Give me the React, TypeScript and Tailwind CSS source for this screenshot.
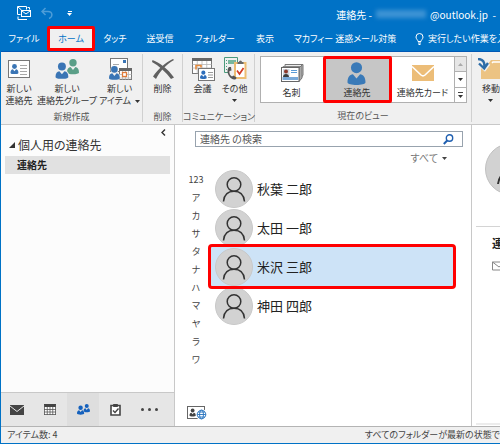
import type { ReactNode } from 'react';

const tabs = [
  { label: 'ファイル', width: 'w-[46px]' },
  { label: 'ホーム', width: 'w-12', active: true },
  { label: 'タッチ', width: 'w-10' },
  { label: '送受信', width: 'w-[50px]' },
  { label: 'フォルダー', width: 'w-[60px]' },
  { label: '表示', width: 'w-10' },
  { label: 'マカフィー 迷惑メール対策', width: 'w-[120px]' },
];

const kanaIndex = ['123', 'ア', 'カ', 'サ', 'タ', 'ナ', 'ハ', 'マ', 'ヤ', 'ラ', 'ワ'];

const contacts = [
  { name: '秋葉 二郎' },
  { name: '太田 一郎' },
  { name: '米沢 三郎', selected: true },
  { name: '神田 四郎' },
];

function Person({ x, y, scale = 1, color }: { x: number; y: number; scale?: number; color: string }) {
  return (
    <g transform={`translate(${x} ${y}) scale(${scale})`} fill={color} style={{ paintOrder: 'stroke' }}>
      <circle cx="6" cy="3.800" r="3.700" />
      <path d="M0 13.500C0 10 1.500 8.300 3.600 8.100L6 11l2.400-2.900C10.500 8.300 12 10 12 13.500c0 1.200-3 1.800-6 1.800s-6-.6-6-1.800z" />
    </g>
  );
}

function NewContactIcon() {
  return (
    <svg width="24" height="20" viewBox="0 0 24 20">
      <rect x="1.500" y="1.500" width="21" height="17" fill="#fff" stroke="#777" />
      <Person x={3.5} y={5} scale={0.66} color="#3a75b5" />
      <path d="M13 6.500h7M13 9.500h7M13 12.500h7M13 15.500h7" stroke="#a8a8a8" />
    </svg>
  );
}

function NewGroupIcon() {
  return (
    <svg width="24" height="20" viewBox="0 0 24 20">
      <Person x={12} y={0} scale={1} color="#5b9f88" />
      <g stroke="#f0f0f0" strokeWidth="1.600">
        <Person x={0.5} y={3.5} scale={1.07} color="#3a75b5" />
      </g>
    </svg>
  );
}

function CalendarGrid({ x, y, w, h }: { x: number; y: number; w: number; h: number }) {
  return (
    <g>
      <rect x={x} y={y} width={w} height={h} fill="#fff" stroke="#777" />
      <path
        d={`M${x} ${y + 6}h${w}M${x} ${y + 9.5}h${w}M${x + w * 0.25} ${y}v${h}M${x + w * 0.5} ${y}v${h}M${x + w * 0.75} ${y}v${h}`}
        stroke="#b5b5b5"
        strokeWidth="0.8"
      />
      <path d={`M${x - 0.5} ${y + 1}h${w + 1}`} stroke="#666" strokeWidth="3" />
    </g>
  );
}

function NewItemIcon() {
  return (
    <svg width="24" height="22" viewBox="0 0 24 22">
      <rect x="2.500" y="0.500" width="17" height="13" fill="#fff" stroke="#777" />
      <path d="M5 6.500h6M5 8.500h4" stroke="#aaa" />
      <rect x="15" y="2" width="3" height="3" fill="#3a75b5" />
      <CalendarGrid x={11.5} y={10.5} w={12} h={11} />
      <rect x="14.500" y="14.500" width="4" height="4" fill="#fff" stroke="#e07b39" strokeWidth="1.300" />
      <g stroke="#f0f0f0" strokeWidth="1.200">
        <Person x={1} y={8} scale={0.9} color="#3a75b5" />
      </g>
    </svg>
  );
}

function DeleteIcon() {
  return (
    <svg width="24" height="22" viewBox="0 0 24 22">
      <path d="M1.500 2C9 5 17 11 23 19.500l-3 1.500C15 14 8 8 1 4z" fill="#606060" />
      <path d="M22 1C14 5 7 11 2 18.500l3 2.500C9 13 15 6.500 23 2z" fill="#606060" />
    </svg>
  );
}

function MeetingIcon() {
  return (
    <svg width="24" height="24" viewBox="0 0 24 24">
      <CalendarGrid x={1.5} y={1.5} w={19} h={15} />
      <path d="M5 12.500V8.500h5v2" fill="none" stroke="#e58a3c" strokeWidth="1.600" />
      <rect x="7.500" y="11.500" width="16" height="12" fill="#fff" stroke="#777" />
      <Person x={9} y={13.5} scale={0.56} color="#2e6ebb" />
      <path d="M17 15.500h5M17 18h5M17 20.500h5" stroke="#999" />
    </svg>
  );
}

function OtherIcon() {
  return (
    <svg width="24" height="24" viewBox="0 0 24 24">
      <path d="M14.500 5V0.500h-13v15h4" fill="none" stroke="#4b9a7c" />
      <path d="M3 3.500h1M3 6.500h1M3 9.500h1M3 12.500h1" stroke="#4b9a7c" />
      <rect x="5" y="3" width="8" height="4" fill="#78b79d" />
      <rect x="12" y="6" width="10.500" height="15" fill="#fff" stroke="#edbd73" strokeWidth="2" />
      <path d="M14.500 7V5h1.500a1.500 1.500 0 0 1 3 0h1.500v2z" fill="#666" />
      <path d="M14 13.500l2.500 3.500 4-6" fill="none" stroke="#d33b24" strokeWidth="1.700" />
      <path d="M6 10c-2 2-2 6 0 9s5 4.500 7 3l.5-1.500-3-2-1.500 1c-2-1-3-3.500-2.500-5.500l2-.5L8 10z" fill="#555" />
    </svg>
  );
}

function BusinessCardIcon() {
  return (
    <svg width="24" height="20" viewBox="0 0 24 20">
      <path d="M5 4V1.500h18V12l-2 3" fill="#ececec" stroke="#777" />
      <path d="M3 6V3.500h18V14" fill="#fff" stroke="#888" />
      <path d="M19 5l3-3v13l-3 3.500z" fill="#aaa" stroke="#777" />
      <rect x="1.500" y="4.500" width="17.500" height="14" fill="#fff" stroke="#666" />
      <rect x="3" y="6" width="6.500" height="7.500" fill="#cfd8e0" />
      <circle cx="6" cy="8.500" r="2" fill="#8c3a2c" />
      <path d="M3 14c0-4 6-4 6 0z" fill="#3c3c3c" />
      <path d="M11 7.500h6M11 9.500h6" stroke="#5b9bd5" />
      <rect x="2.500" y="14" width="15.500" height="3" fill="#79a9d8" />
    </svg>
  );
}

function EnvelopeIcon() {
  return (
    <svg width="24" height="18" viewBox="0 0 24 18">
      <rect x="1" y="1" width="22" height="16" fill="#ecbd78" />
      <path d="M1 2.500l9 8.500q2 1.800 4 0l9-8.500" fill="none" stroke="#fff" strokeWidth="1.600" />
    </svg>
  );
}

function MoveIcon() {
  return (
    <svg width="26" height="22" viewBox="0 0 26 22">
      <path d="M3 21V6h7l3-4h9l3 4h1v15z" fill="#ecc383" />
      <path d="M14 5l1-1h7" fill="none" stroke="#fff" strokeWidth="1.500" />
      <path d="M1 1c5 0 7 3 6 9M2 6l4.700 4.500L10.500 5.500" fill="none" stroke="#f0f0f0" strokeWidth="4.500" />
      <path d="M0 1c5 0 7 3 6.200 9M1 5.500l5.200 5L10 5" fill="none" stroke="#2e6da8" strokeWidth="2.400" />
    </svg>
  );
}

function Caret({ className = '' }: { className?: string }) {
  return (
    <svg className={className} width="5" height="3" viewBox="0 0 5 3">
      <path d="M0 0h5L2.500 3z" fill="currentColor" />
    </svg>
  );
}

function RibbonButton({ icon, lines, width, caret }: { icon: ReactNode; lines: string[]; width: string; caret?: boolean }) {
  return (
    <button type="button" className={`flex shrink-0 flex-col items-center whitespace-nowrap ${width}`}>
      <span className="flex h-6 items-center justify-center">{icon}</span>
      <span className="mt-0.5 flex h-6 flex-col items-center leading-3">
        {lines.map((line, i) => (
          <span key={line} className="flex items-center gap-1">
            {line}
            {caret && i === 1 && <Caret />}
          </span>
        ))}
        {caret && lines.length === 1 && <Caret className="mt-1" />}
      </span>
    </button>
  );
}

function RibbonGroup({ label, width, children }: { label: string; width: string; children: ReactNode }) {
  return (
    <section className={`my-0.5 flex shrink-0 flex-col border-r border-[#d0d0d0] ${width}`}>
      <div className="flex h-[54px] justify-center pt-[3px]">{children}</div>
      <h2 className="mt-1 text-center leading-3 whitespace-nowrap text-[#555]">{label}</h2>
    </section>
  );
}

function Avatar() {
  return (
    <svg className="shrink-0" width="38" height="38" viewBox="0 0 38 38">
      <circle cx="19" cy="19" r="18.500" fill="#d2d2d2" stroke="#c8c8c8" />
      <g fill="none" stroke="#333" strokeWidth="1.500">
        <ellipse cx="19" cy="14.500" rx="6.800" ry="6.800" />
        <path d="M8.500 31.500c.6-6.800 4.800-10.200 10.500-10.200s9.900 3.400 10.500 10.200" />
      </g>
    </svg>
  );
}

function TitleBar() {
  return (
    <div className="flex h-[26px] items-center pl-4 text-white">
      <button type="button" aria-label="送受信">
        <svg width="14" height="14" viewBox="0 0 14 14" fill="none" stroke="#fff">
          <path d="M3.500 8.500h-3v-8h9v3M1 1l3.500 3" />
          <rect x="4.500" y="4.500" width="9" height="6" fill="#0072c6" />
          <path d="M5 5l4 3 4-3M1 10.500v3h9M10.500 1.500h2v2" />
        </svg>
      </button>
      <button type="button" aria-label="元に戻す" className="ml-[10px]">
        <svg width="12" height="12" viewBox="0 0 12 12" fill="none" stroke="#4d9dd8" strokeWidth="1.500">
          <path d="M4.500 1L1 4.500 4.500 8M1 4.500h6c5 0 5 6 1 7" />
        </svg>
      </button>
      <button type="button" aria-label="カスタマイズ" className="ml-[14px] flex flex-col items-center gap-px">
        <span className="h-px w-1 bg-white" />
        <Caret />
      </button>
      <h1 className="mt-0.5 ml-auto flex shrink-0 items-center pr-1 text-[10px] whitespace-nowrap">
        連絡先 -<span className="mx-1 h-2 w-[50px] bg-[#3d93d4] blur-[2px]" />
        @outlook.jp&nbsp; -
      </h1>
    </div>
  );
}

function TabBar() {
  return (
    <nav className="flex h-[26px] border-b border-[#0058b4] text-white">
      {tabs.map((tab) => (
        <button
          key={tab.label}
          type="button"
          className={`shrink-0 whitespace-nowrap ${tab.width} ${
            tab.active ? 'rounded-xs border-[3px] border-[#ff0000] bg-[#f0f0f0] text-[#0072c6]' : ''
          }`}
        >
          {tab.label}
        </button>
      ))}
      <button type="button" className="ml-[10px] flex shrink-0 items-center gap-1 whitespace-nowrap">
        <svg width="9" height="12" viewBox="0 0 9 12" fill="none" stroke="#fff">
          <path d="M3 8.500C3 7 1 6 1 4a3.500 3.500 0 0 1 7 0c0 2-2 3-2 4.500zM3 10h3M3.500 11.500h2" />
        </svg>
        実行したい作業を入力
      </button>
    </nav>
  );
}

function ViewGallery() {
  return (
    <div className="-mt-px flex h-[47px] border border-[#b0b0b0] bg-white">
      <button type="button" className="flex w-[62px] flex-col items-center pt-1.5">
        <BusinessCardIcon />
        <span className="mt-1 leading-3">名刺</span>
      </button>
      <button
        type="button"
        className="-my-px flex w-[69px] flex-col items-center rounded-xs border-[3px] border-[#ff0000] bg-[#c6c6c6] pt-[3px]"
      >
        <svg width="20" height="23" viewBox="0 0 20 23">
          <Person x={0.5} y={0} scale={1.5} color="#3a7ab8" />
        </svg>
        <span className="mt-0.5 leading-3">連絡先</span>
      </button>
      <button type="button" className="flex w-[62px] flex-col items-center pt-[7px] whitespace-nowrap">
        <EnvelopeIcon />
        <span className="mt-[5px] leading-3">連絡先カード</span>
      </button>
      <div className="flex w-3 flex-col divide-y divide-[#b0b0b0] border-l border-[#b0b0b0]">
        <button type="button" aria-label="上へ" className="flex flex-1 items-center justify-center bg-[#e6e6e6] text-[#aaa]">
          <Caret className="rotate-180" />
        </button>
        <button type="button" aria-label="下へ" className="flex flex-1 items-center justify-center">
          <Caret />
        </button>
        <button type="button" aria-label="その他のビュー" className="flex flex-1 flex-col items-center justify-center gap-0.5">
          <span className="h-px w-[5px] bg-[#444]" />
          <Caret />
        </button>
      </div>
    </div>
  );
}

function Ribbon() {
  return (
    <div className="flex h-[73px] border-b border-[#c8c8c8] bg-[#f0f0f0] text-[#333]">
      <RibbonGroup label="新規作成" width="w-[142px]">
        <RibbonButton icon={<NewContactIcon />} lines={['新しい', '連絡先']} width="w-[34px]" />
        <RibbonButton icon={<NewGroupIcon />} lines={['新しい', '連絡先グループ']} width="w-[62px]" />
        <RibbonButton icon={<NewItemIcon />} lines={['新しい', 'アイテム']} width="w-[43px]" caret />
      </RibbonGroup>
      <RibbonGroup label="削除" width="w-10">
        <RibbonButton icon={<DeleteIcon />} lines={['削除']} width="w-9" />
      </RibbonGroup>
      <RibbonGroup label="コミュニケーション" width="w-[72px]">
        <RibbonButton icon={<MeetingIcon />} lines={['会議']} width="w-8" />
        <RibbonButton icon={<OtherIcon />} lines={['その他']} width="w-8" caret />
      </RibbonGroup>
      <RibbonGroup label="現在のビュー" width="w-[217px]">
        <ViewGallery />
      </RibbonGroup>
      <div className="mt-0.5 pt-[3px] pl-1.5">
        <RibbonButton icon={<MoveIcon />} lines={['移動']} width="w-[26px]" caret />
      </div>
    </div>
  );
}

function FolderPane() {
  return (
    <aside className="flex w-[174px] shrink-0 flex-col border-r border-[#c8c8c8] bg-[#fcfcfc]">
      <button type="button" aria-label="最小化" className="mt-1 mr-2 self-end text-[#333]">
        <svg width="5" height="7" viewBox="0 0 5 7" fill="none" stroke="currentColor" strokeWidth="1.400">
          <path d="M4 .5l-3 3 3 3" />
        </svg>
      </button>
      <h2 className="flex items-center gap-[3px] pl-2 text-[12px] leading-[18px] text-[#333]">
        <svg width="6" height="6" viewBox="0 0 6 6">
          <path d="M6 0v6H0z" fill="#333" />
        </svg>
        個人用の連絡先
      </h2>
      <a href="#contacts" className="mx-1 mt-0.5 bg-[#e1e1e1] pl-3 text-[10px] leading-[18px] font-bold text-[#222]">
        連絡先
      </a>
      <nav className="mt-auto flex h-[34px] border-t border-[#c8c8c8] bg-[#e6e6e6] text-[#444]">
        <button type="button" aria-label="メール" className="flex w-8 items-center justify-center">
          <svg width="14" height="10" viewBox="0 0 14 10">
            <rect width="14" height="10" fill="#444" />
            <path d="M0 1l7 5.500L14 1" fill="none" stroke="#e6e6e6" />
          </svg>
        </button>
        <button type="button" aria-label="予定表" className="flex w-[34px] items-center justify-center">
          <svg width="12" height="11" viewBox="0 0 12 11">
            <path d="M.5 0h11v11H.500z" fill="#fff" />
            <path d="M0 1.500h12" stroke="#444" strokeWidth="3" />
            <path d="M0 5.500h12M0 8h12M0 10.500h12M.5 1v10M3.250 3v8M6 3v8M8.750 3v8M11.500 1v10" stroke="#555" strokeWidth="0.800" />
          </svg>
        </button>
        <button type="button" aria-label="連絡先" className="flex w-8 items-center justify-center bg-[#dedede]">
          <svg width="13" height="11" viewBox="0 0 13 11">
            <Person x={6.5} y={0} scale={0.54} color="#1461bd" />
            <g stroke="#dedede" strokeWidth="1.500">
              <Person x={0} y={1.5} scale={0.6} color="#1461bd" />
            </g>
          </svg>
        </button>
        <button type="button" aria-label="タスク" className="flex w-8 items-center justify-center">
          <svg width="11" height="13" viewBox="0 0 11 13" fill="none" stroke="#444">
            <path d="M1 2.500h9v9.500H1z" fill="#fff" strokeWidth="1.600" />
            <path d="M3.500 1.500h4v2h-4z" fill="#444" />
            <path d="M3 7.500l2 2 3.500-4" strokeWidth="1.400" />
          </svg>
        </button>
        <button type="button" aria-label="その他" className="flex w-9 items-center justify-center gap-1">
          <span className="size-[3px] rounded-full bg-[#444]" />
          <span className="size-[3px] rounded-full bg-[#444]" />
          <span className="size-[3px] rounded-full bg-[#444]" />
        </button>
      </nav>
    </aside>
  );
}

function ContactList() {
  return (
    <main className="flex w-[297px] shrink-0 flex-col border-r border-[#c8c8c8] pl-2">
      <div className="mt-1.5 mr-2 ml-3 flex h-4 items-center border border-[#98a3ae] px-1">
        <input
          type="text"
          aria-label="連絡先の検索"
          defaultValue="連絡先 の検索"
          className="min-w-0 flex-1 text-[10px] leading-3 text-[#555] outline-none"
        />
        <button type="button" aria-label="検索" className="mr-1">
          <svg width="11" height="11" viewBox="0 0 11 11" fill="none" stroke="#1f5fb0">
            <circle cx="6.500" cy="4" r="3.200" strokeWidth="1.400" />
            <path d="M4.200 6.500L.8 10" strokeWidth="2" />
          </svg>
        </button>
      </div>
      <button type="button" className="mt-[3px] mr-6 flex items-center gap-1 self-end text-[10px] leading-4 text-[#777]">
        すべて
        <Caret className="text-[#444]" />
      </button>
      <div className="mt-[3px] flex">
        <ul className="mr-0.5 w-[26px] pt-0.5 text-center leading-[18px] text-[#444]">
          {kanaIndex.map((kana) => (
            <li key={kana}>{kana}</li>
          ))}
        </ul>
        <ul className="mr-[18px] flex-1">
          {contacts.map((contact) => (
            <li
              key={contact.name}
              className={`flex h-[39px] items-center gap-1 pl-1 text-[13px] text-[#222] ${
                contact.selected ? 'relative rounded-[1px] bg-[#cde3f7] outline-3 outline-[#ff0000]' : ''
              }`}
            >
              <Avatar />
              {contact.name}
            </li>
          ))}
        </ul>
      </div>
      <button type="button" aria-label="アドレス帳" className="mt-auto mb-1.5 ml-1 self-start">
        <svg width="20" height="14" viewBox="0 0 20 14">
          <rect x="0.500" y="0.500" width="17" height="12" fill="#fff" stroke="#666" />
          <Person x={2.5} y={2.5} scale={0.52} color="#444" />
          <circle cx="14.500" cy="8.500" r="5.500" fill="#fff" />
          <g fill="none" stroke="#2370bd" strokeWidth="0.900">
            <circle cx="14.500" cy="8.500" r="4.300" />
            <ellipse cx="14.500" cy="8.500" rx="2" ry="4.300" />
            <path d="M10.200 8.500h8.600M11 6h7M11 11h7" />
          </g>
        </svg>
      </button>
    </main>
  );
}

function DetailPane() {
  return (
    <section className="flex min-w-0 flex-1 flex-col overflow-hidden pl-1">
      <svg className="mt-[18px] ml-[9px] shrink-0" width="52" height="52" viewBox="0 0 52 52">
        <circle cx="26" cy="26" r="25.500" fill="#d2d2d2" stroke="#c0c0c0" />
        <g fill="none" stroke="#333" strokeWidth="2">
          <circle cx="26" cy="20" r="9" />
          <path d="M13 41c1-8 6-12 13-12s12 4 13 12" />
        </g>
      </svg>
      <div className="mt-[31px] border-t border-[#d4d4d4] pt-2 pl-4">
        <h2 className="text-[11px] leading-4 font-bold whitespace-nowrap text-[#222]">連絡先</h2>
        <svg className="mt-2.5" width="14" height="10" viewBox="0 0 14 10" fill="none" stroke="#888">
          <path d="M.5 1h13v8H.500zM.5 1L7 6l6.500-5" />
        </svg>
      </div>
      <div className="mt-auto mb-px h-0.5 bg-[#ececec]" />
    </section>
  );
}

export default function App() {
  return (
    <div className="flex min-h-screen flex-col overflow-hidden border-b border-l border-[#0072c6] bg-white font-['Noto_Sans_CJK_JP',sans-serif] text-[9px] [font-feature-settings:'palt']">
      <header className="bg-[#0072c6]">
        <TitleBar />
        <TabBar />
      </header>
      <Ribbon />
      <div className="flex flex-1">
        <FolderPane />
        <ContactList />
        <DetailPane />
      </div>
      <footer className="flex h-[17px] items-center justify-between border-t border-[#b4b4b4] bg-[#f0f0f0] pl-1.5 whitespace-nowrap text-[#444]">
        <span>アイテム数: 4</span>
        <span>すべてのフォルダーが最新の状態で</span>
      </footer>
    </div>
  );
}
